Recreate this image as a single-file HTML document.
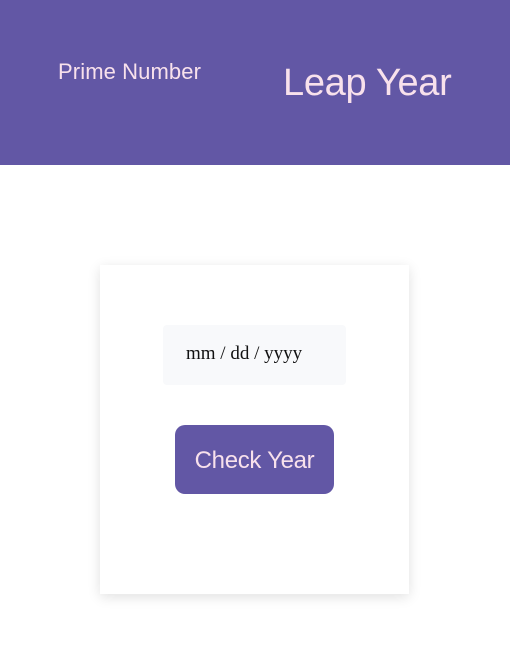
<!DOCTYPE html>
<html><head><style>
body{margin:0;width:510px;height:661px;background:#fff;font-family:"Liberation Sans",sans-serif;position:relative;overflow:hidden}
.hd{position:absolute;left:0;top:0;width:510px;height:165px;background:#6257a5}
.p{position:absolute;left:58px;top:59px;font-size:22px;color:#f8e1ec;letter-spacing:0.1px}
.l{position:absolute;left:283px;top:62px;font-size:38px;color:#f8e1ec;letter-spacing:-0.3px}
.card{position:absolute;left:100px;top:265px;width:309px;height:329px;background:#fff;box-shadow:0 3px 12px rgba(0,0,0,0.12)}
.in{position:absolute;left:163px;top:325px;width:183px;height:60px;background:#f8f9fb;border-radius:4px}
.in span{position:absolute;left:23px;top:18px;font-family:"Liberation Serif",serif;font-size:19px;color:#111}
.btn{position:absolute;left:175px;top:425px;width:159px;height:69px;background:#6257a5;border-radius:10px;color:#f8e1ec;font-size:24px;line-height:71px;text-align:center;letter-spacing:-0.3px}
</style></head><body>
<div class="hd"><div class="p">Prime Number</div><div class="l">Leap Year</div></div>
<div class="card"></div>
<div class="in"><span>mm / dd / yyyy</span></div>
<div class="btn">Check Year</div>
</body></html>
